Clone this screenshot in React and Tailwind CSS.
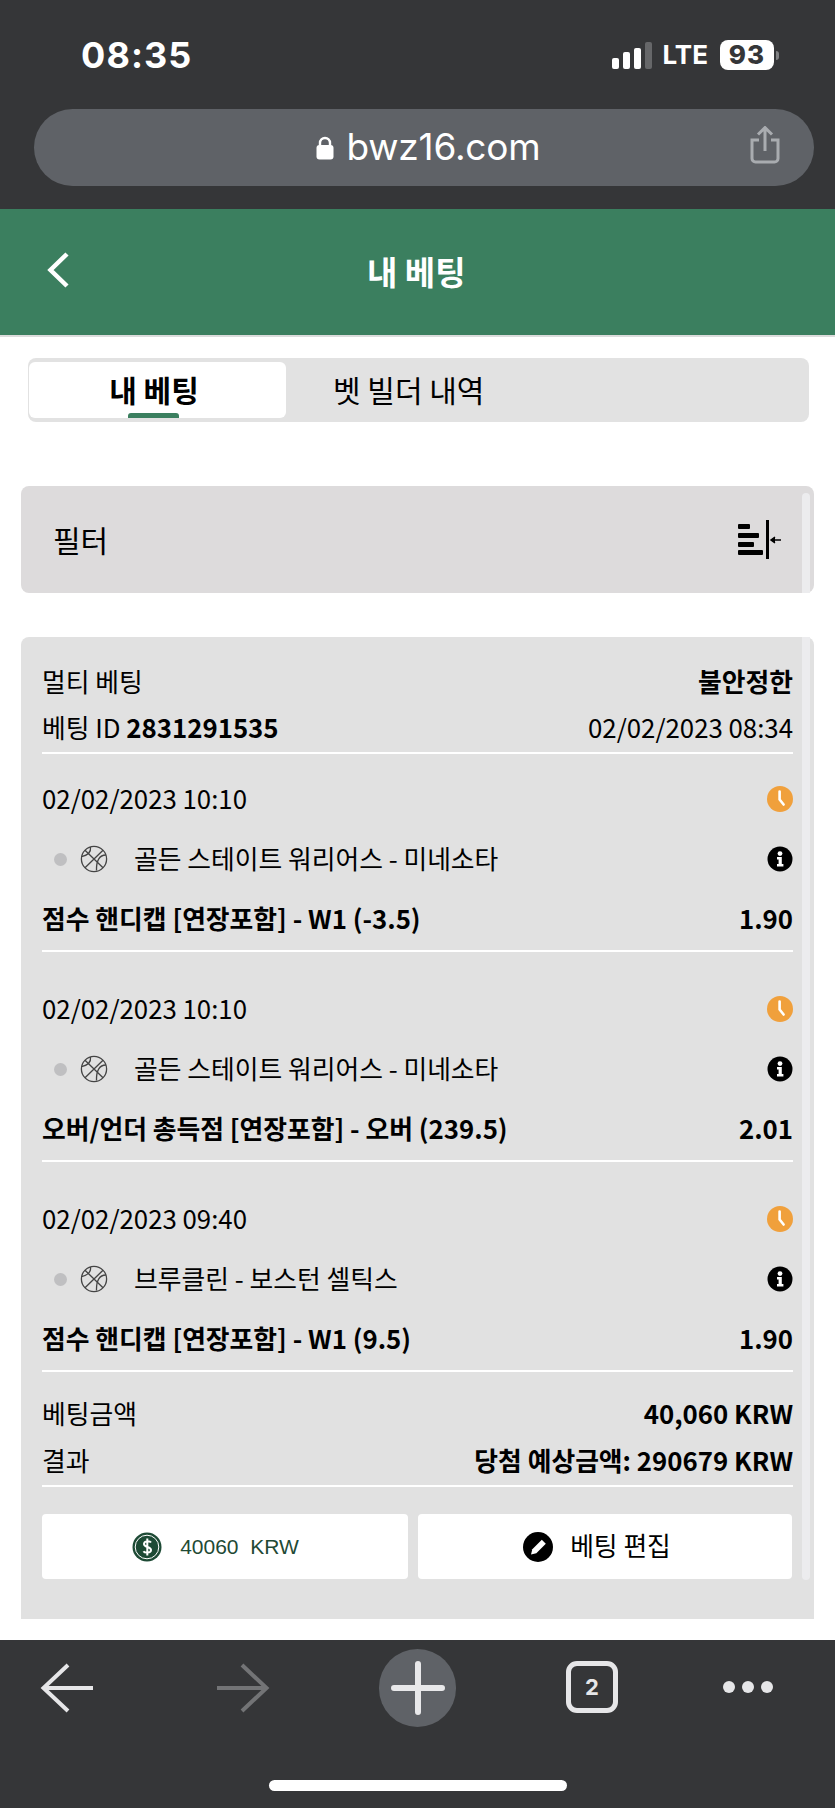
const KR = "font-['Noto_Sans_CJK_KR','Noto_Sans_KR',sans-serif]";

function Clock() {
  return (
    <svg width="26" height="26" viewBox="0 0 26 26" className="shrink-0">
      <circle cx="13" cy="13" r="13" fill="#f0a03c" />
      <path d="M12.6 5.5v8l4 5" fill="none" stroke="#fff" strokeWidth="2.6" strokeLinecap="round" strokeLinejoin="round" />
    </svg>
  );
}

function Info() {
  return (
    <svg width="26" height="26" viewBox="0 0 26 26" className="shrink-0">
      <circle cx="13" cy="13" r="12.5" fill="#000" />
      <circle cx="13" cy="7.6" r="2.4" fill="#fff" />
      <path d="M10 11h4.8v7h1.6v2.6H10V18h1.600v-4.400H10z" fill="#fff" />
    </svg>
  );
}

function Ball() {
  return (
    <svg width="28" height="28" viewBox="0 0 28 28" className="shrink-0" fill="none" stroke="#444" strokeWidth="1.3">
      <circle cx="14" cy="14" r="12.6" />
      <path d="M5 5.2 23 22.8M23 5.2 5 22.8" />
      <path d="M10.5 2c.6 4.5-1.800 8-8.900 9.600M25.800 10c-6 0-9.600 5-9.300 15.500" />
    </svg>
  );
}

function Group({ first, date, match, bet, odds }) {
  return (
    <div className={`${first ? "" : "mt-3"} flex h-[198px] flex-col border-b-2 border-white pt-7`}>
      <div className="flex h-9 items-center justify-between pb-[2px]">
        <span className="pb-[2px]">{date}</span>
        <Clock />
      </div>
      <div className="mt-[18px] flex h-[46px] items-center">
        <span className="ml-[12px] size-[13px] rounded-full bg-[#bfbfc1]" />
        <span className="ml-[13px]"><Ball /></span>
        <span className="ml-[26px] flex-1 pb-[2px]">{match}</span>
        <Info />
      </div>
      <div className="mt-5 flex h-9 items-center justify-between pb-[4px] font-bold">
        <span>{bet}</span>
        <span>{odds}</span>
      </div>
    </div>
  );
}

function StatusBar() {
  return (
    <div className="flex h-[209px] flex-col bg-[#353638] font-['Inter',sans-serif] text-white">
      <div className="flex h-[109px] items-start justify-between pl-[81px] pr-[56px] pt-[33px]">
        <span className="text-[36px] font-bold leading-[44px] tracking-[1.1px]">08:35</span>
        <div className="flex items-center pt-[7px]">
          <div className="flex h-[27px] items-end gap-[4px]">
            <span className="h-[11px] w-[7px] rounded-[2px] bg-white" />
            <span className="h-[17px] w-[7px] rounded-[2px] bg-white" />
            <span className="h-[21px] w-[7px] rounded-[2px] bg-white" />
            <span className="h-[27px] w-[7px] rounded-[2px] bg-[#666769]" />
          </div>
          <span className="ml-[11px] text-[26px] font-bold leading-[30px]">LTE</span>
          <span className="ml-[12px] flex h-[30px] w-[54px] items-center justify-center rounded-[8px] bg-white text-[26px] font-extrabold leading-none tracking-[1px] text-[#353638]">93</span>
          <span className="ml-[2px] h-[9px] w-[3px] rounded-r-full bg-[#808183]" />
        </div>
      </div>
      <div className="relative ml-[34px] flex h-[77px] w-[780px] items-center justify-center rounded-full bg-[#5f6267] pl-[9px]">
        <svg width="18" height="24" viewBox="0 0 18 24" className="mr-[12px]">
          <path d="M4 11V7a5 5 0 0 1 10 0v4" fill="none" stroke="#fff" strokeWidth="2.4" />
          <rect x="0.5" y="9" width="17" height="14.5" rx="3" fill="#fff" />
        </svg>
        <span className="pb-[2px] text-[37px] leading-none tracking-[-0.2px]">bwz16.com</span>
        <svg width="32" height="38" viewBox="0 0 32 38" className="absolute right-[33px] top-[17px]" fill="none" stroke="#a9acb0" strokeWidth="3">
          <path d="M16 25V2M9 8.5 16 1.6l7 6.9" />
          <path d="M10 14H3v18.5a3.5 3.5 0 0 0 3.5 3.5h19a3.5 3.5 0 0 0 3.5-3.5V14h-7" />
        </svg>
      </div>
    </div>
  );
}

function BottomBar() {
  return (
    <div className="flex h-[168px] flex-col bg-[#353638]">
      <div className="flex h-[140px] items-start pl-[40px] pt-[9px]">
        <svg width="56" height="52" viewBox="0 0 56 52" className="mt-[13px]" fill="none" stroke="#e6e6e8" strokeWidth="4">
          <path d="M53 26H4M28 3 3.500 26 28 49" />
        </svg>
        <svg width="56" height="52" viewBox="0 0 56 52" className="ml-[118px] mt-[13px]" fill="none" stroke="#737476" strokeWidth="4">
          <path d="M3 26h49M28 3l24.500 23L28 49" />
        </svg>
        <div className="ml-[109px] flex h-[78px] w-[77px] items-center justify-center rounded-full bg-[#5f6267]">
          <svg width="54" height="54" viewBox="0 0 54 54" fill="none" stroke="#e8e8ea" strokeWidth="6" strokeLinecap="round">
            <path d="M27 3v48M3 27h48" />
          </svg>
        </div>
        <div className="ml-[110px] mt-[12px] flex h-[52px] w-[52px] items-center justify-center rounded-[11px] border-[5px] border-[#e6e6e8] font-['Inter',sans-serif] text-[22px] font-bold text-[#e6e6e8]">2</div>
        <div className="ml-[105px] mt-[32px] flex gap-[7px]">
          <span className="size-[12px] rounded-full bg-[#e6e6e8]" />
          <span className="size-[12px] rounded-full bg-[#e6e6e8]" />
          <span className="size-[12px] rounded-full bg-[#e6e6e8]" />
        </div>
      </div>
      <div className="mx-auto h-[11px] w-[298px] rounded-full bg-white" />
    </div>
  );
}

export default function App() {
  return (
    <div className={`flex h-[1808px] w-[835px] flex-col overflow-hidden bg-white text-[25.8px] text-black ${KR}`}>
      <StatusBar />

      <header className="flex h-[128px] items-start border-b-2 border-[#dcdcdc] bg-[#3b7f5f] pl-[47px] text-white">
        <svg width="22" height="36" viewBox="0 0 22 36" className="mt-[43px]" fill="none" stroke="#fff" strokeWidth="4.500">
          <path d="M20 2 3.500 18 20 34" />
        </svg>
        <h1 className="ml-[298px] mt-[39px] text-[33px] font-bold leading-[46px]">내 베팅</h1>
      </header>

      <div className="ml-[28px] mr-[26px] mt-[21px] flex h-[64px] items-start rounded-[8px] bg-[#e2e2e2] pl-px pt-1 text-[30px]">
        <div className="relative flex h-[56px] w-[257px] items-center justify-center rounded-[6px] bg-white pr-[7px] font-bold">
          <span className="pb-[2px]">내 베팅</span>
          <span className="absolute bottom-0 left-[99px] h-[5px] w-[51px] rounded-t-[3px] bg-[#3b7f5f]" />
        </div>
        <div className="ml-[47px] flex h-[56px] items-center pb-[2px]">벳 빌더 내역</div>
      </div>

      <div className="relative mx-[21px] mt-[64px] flex h-[107px] items-center justify-between rounded-[8px] bg-[#dddbdc] pl-[32px] pr-[33px] text-[30px]">
        <span>필터</span>
        <svg width="44" height="40" viewBox="0 0 44 40" className="shrink-0">
          <rect x="1" y="4" width="12" height="5" rx="1" fill="#000" />
          <rect x="1" y="13" width="21" height="5" rx="1" fill="#000" />
          <rect x="1" y="22" width="16" height="5" rx="1" fill="#000" />
          <rect x="1" y="30" width="25" height="5" rx="1" fill="#000" />
          <rect x="29" y="0" width="3" height="39" fill="#000" />
          <path d="M34 20h10M38 17l-4 3 4 3" fill="#000" stroke="#000" strokeWidth="1.500" />
        </svg>
        <span className="absolute right-[4px] top-[7px] bottom-0 w-[8px] rounded-t-full bg-[#ececee]" />
      </div>

      <div className="relative mx-[21px] mt-[44px] h-[982px] rounded-t-[8px] bg-[#e1e1e1] pl-[21px] pr-[21px] pt-[21px]">
        <span className="absolute right-[4px] top-0 h-[943px] w-[8px] rounded-b-full bg-[#ececee]" />
        <div className="flex h-[48px] items-center justify-between pb-[2px]">
          <span>멀티 베팅</span>
          <span className="font-bold">불안정한</span>
        </div>
        <div className="flex h-[48px] items-center justify-between border-b-2 border-white pb-[3px]">
          <span>베팅 ID <b>2831291535</b></span>
          <span>02/02/2023 08:34</span>
        </div>

        <Group first date="02/02/2023 10:10" match="골든 스테이트 워리어스 - 미네소타" bet="점수 핸디캡 [연장포함] - W1 (-3.5)" odds="1.90" />
        <Group date="02/02/2023 10:10" match="골든 스테이트 워리어스 - 미네소타" bet="오버/언더 총득점 [연장포함] - 오버 (239.5)" odds="2.01" />
        <Group date="02/02/2023 09:40" match="브루클린 - 보스턴 셀틱스" bet="점수 핸디캡 [연장포함] - W1 (9.5)" odds="1.90" />

        <div className="mt-[19px] flex h-[48px] items-center justify-between pb-[4px]">
          <span>베팅금액</span>
          <span className="font-bold">40,060 KRW</span>
        </div>
        <div className="flex h-[48px] items-center justify-between border-b-2 border-white pb-[4px]">
          <span>결과</span>
          <span className="font-bold">당첨 예상금액: 290679 KRW</span>
        </div>

        <div className="mt-[27px] flex h-[65px] gap-[10px]">
          <div className="flex w-[366px] items-center justify-center rounded-[4px] bg-white pr-[19px]">
            <svg width="30" height="30" viewBox="0 0 30 30" className="shrink-0">
              <circle cx="15" cy="15" r="14.500" fill="#1d4a35" />
              <circle cx="15" cy="15" r="11.800" fill="none" stroke="#fff" strokeWidth="1" />
              <path d="M19 10.500c-1-1.500-7-2-7 1.500 0 3.500 7 2.500 7 6 0 3.500-6.500 3-7.500 1.200M15.300 6.500v17" fill="none" stroke="#fff" strokeWidth="2" />
            </svg>
            <span className="ml-[18px] whitespace-pre font-['Liberation_Sans',sans-serif] text-[21px] text-[#1f4a35]">40060  KRW</span>
          </div>
          <div className="flex w-[374px] items-center justify-center rounded-[4px] bg-white pr-[16px]">
            <svg width="30" height="30" viewBox="0 0 30 30" className="shrink-0">
              <circle cx="15" cy="15" r="15" fill="#000" />
              <path d="M8 22.500l1.300-5.300L18.800 7.700l4 4-9.500 9.500z" fill="#fff" />
            </svg>
            <span className="ml-[17px] pb-[2px]">베팅 편집</span>
          </div>
        </div>
      </div>

      <div className="mt-auto">
        <BottomBar />
      </div>
    </div>
  );
}
